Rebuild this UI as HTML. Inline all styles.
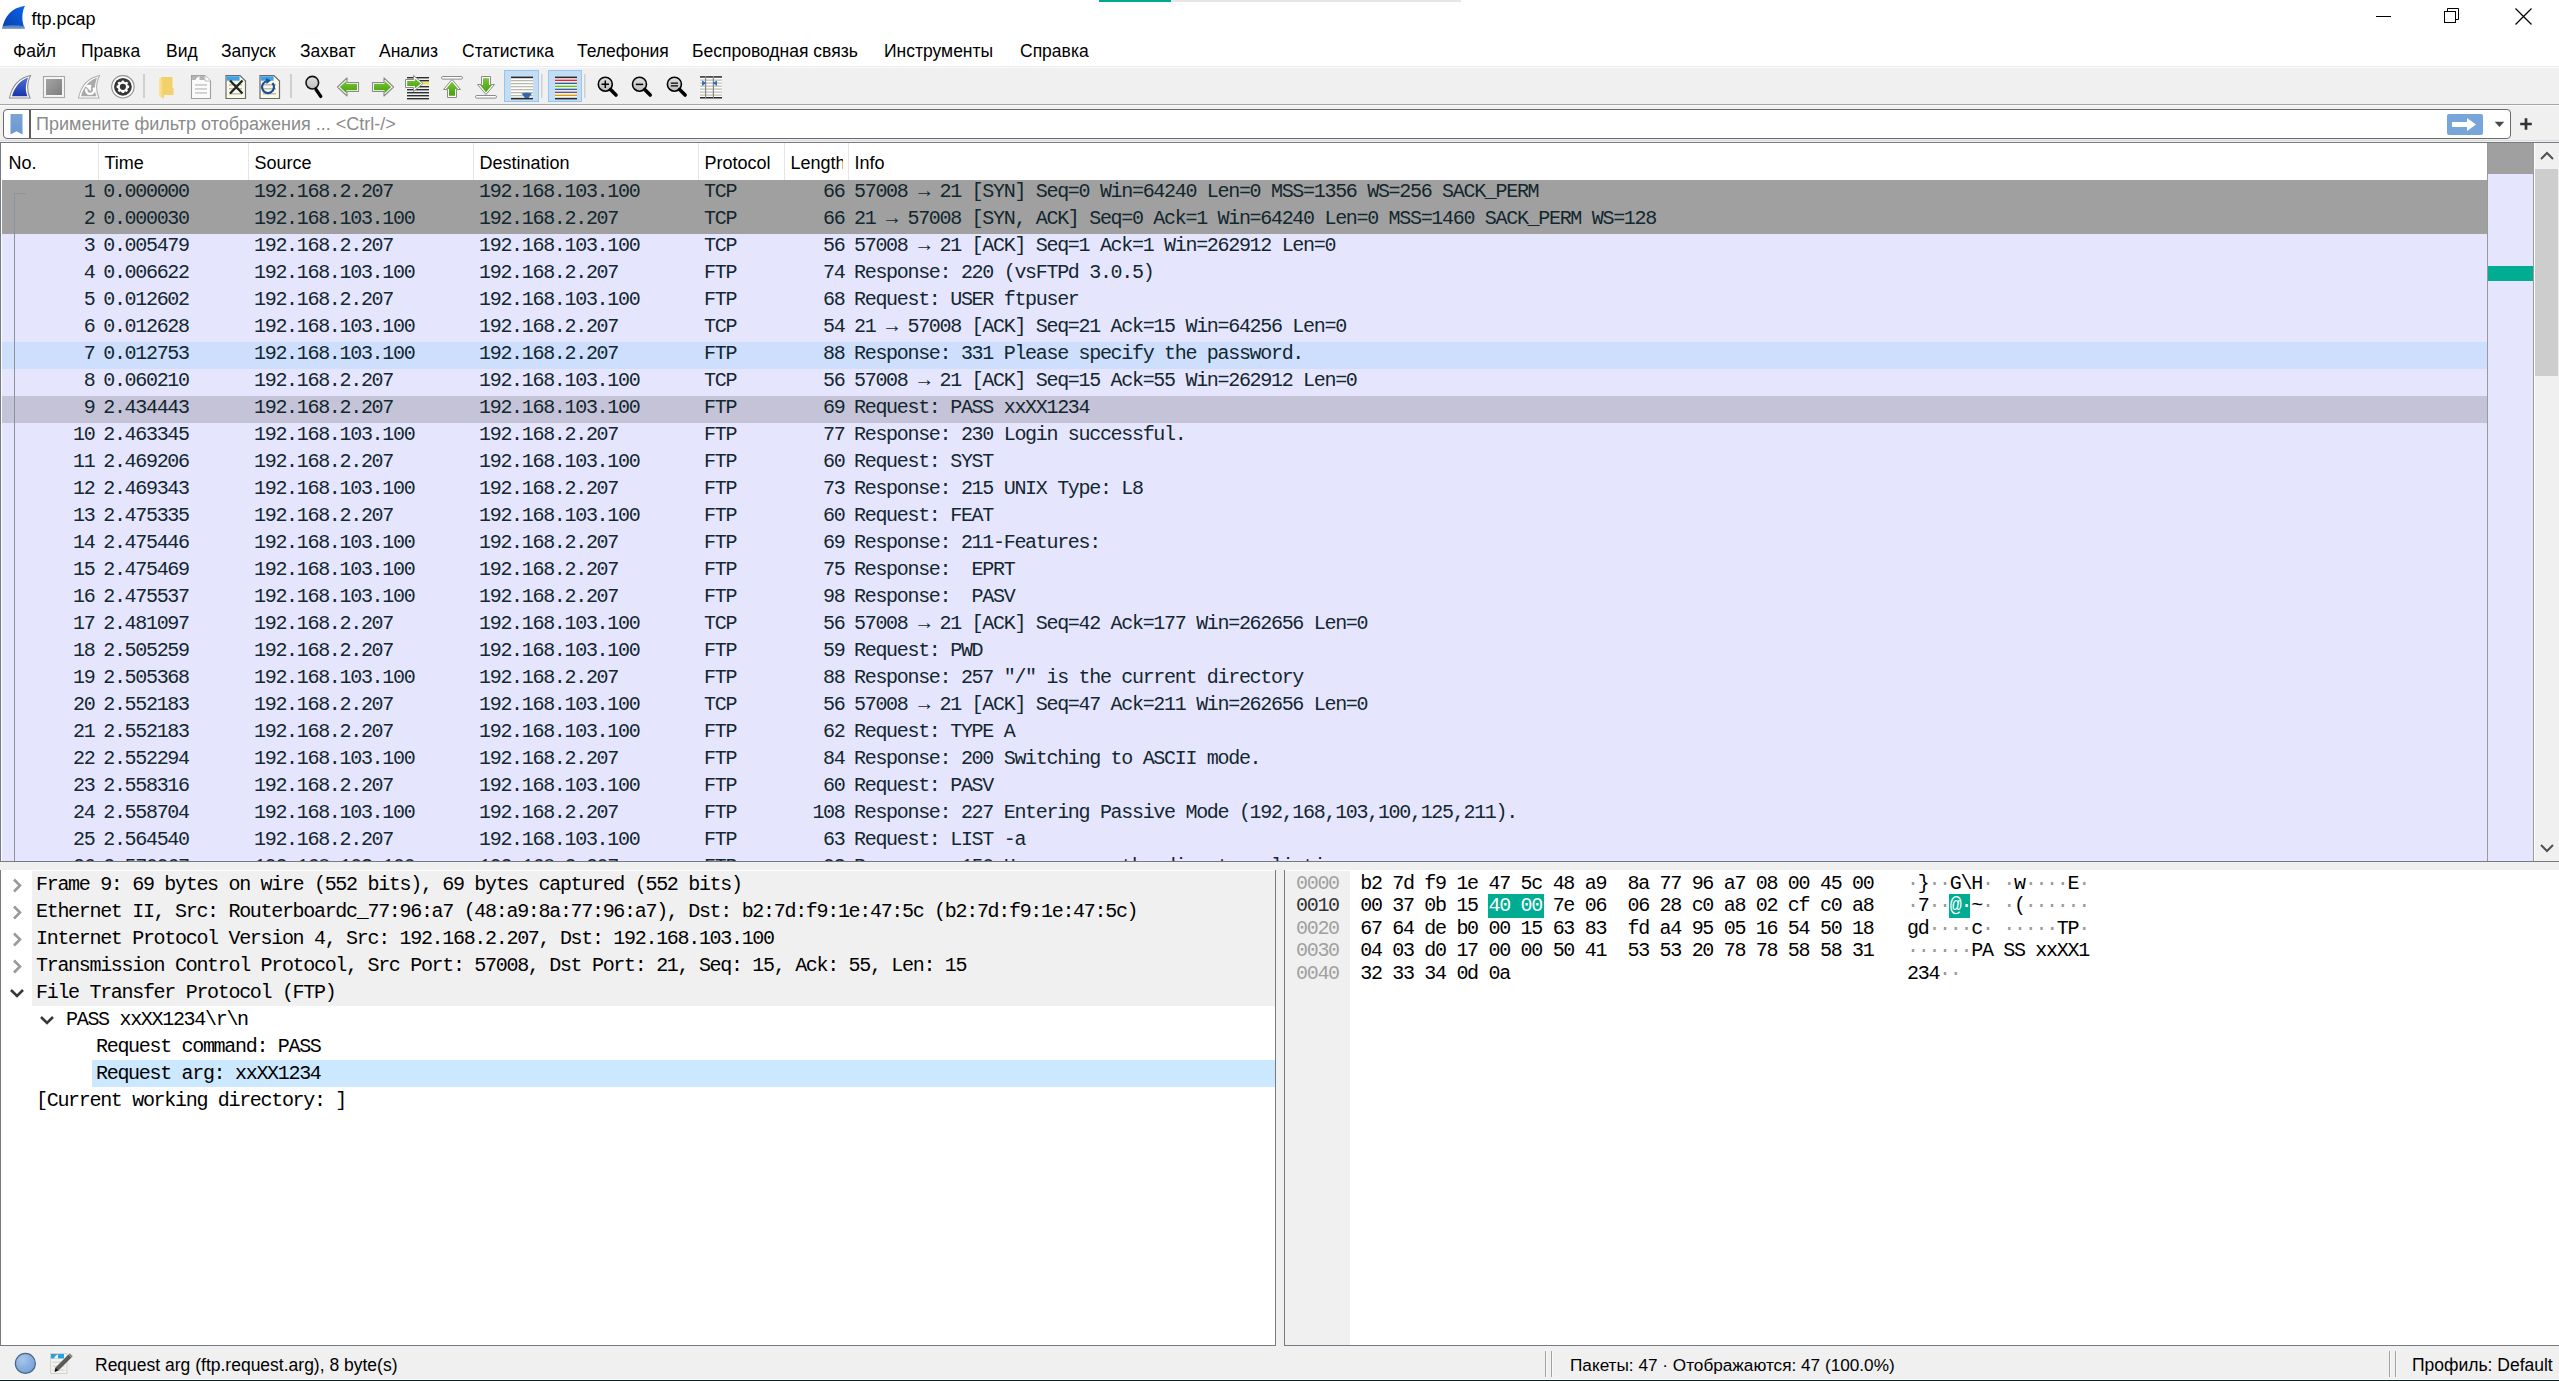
<!DOCTYPE html>
<html><head><meta charset="utf-8"><title>ftp.pcap</title>
<style>
*{box-sizing:border-box}
html,body{margin:0;padding:0}
body{width:2559px;height:1381px;overflow:hidden;position:relative;background:#fff;font-family:"Liberation Sans",sans-serif;color:#000}
.a{position:absolute}
.s{position:absolute;white-space:pre;font-family:"Liberation Sans",sans-serif}
.m{position:absolute;white-space:pre;font-family:"Liberation Mono",monospace;font-size:20px;letter-spacing:-1.31px;line-height:27px;color:#12272e}
.h{position:absolute;white-space:pre;font-family:"Liberation Mono",monospace;font-size:20px;letter-spacing:-1.31px;line-height:22px;color:#000}
.menu{position:absolute;top:35.3px;font-size:17.5px;line-height:32px;white-space:pre}
svg{position:absolute;overflow:visible}
</style></head><body>

<div class="a" style="left:1099px;top:0;width:72px;height:2px;background:#00a88f"></div>
<div class="a" style="left:1171px;top:0;width:290px;height:2px;background:#e6e6e6"></div>
<svg style="left:0;top:0" width="30" height="34"><defs><linearGradient id="gt" x1="1" y1="0" x2="0" y2="1"><stop offset="0" stop-color="#0b63e8"/><stop offset="0.6" stop-color="#0a4ec4"/><stop offset="1" stop-color="#0a3fa8"/></linearGradient></defs>
<path d="M2.2 28.4 C4.5 17 11 8 25 5.8 C22 11.5 21.2 20.5 24.7 28.4 Z" fill="url(#gt)"/><path d="M3 26 Q13 24.5 24.3 26.2 L24.7 28.6 H2.2 Z" fill="#6d95d6" opacity="0.8"/><path d="M2.2 28.2 H24.7" stroke="#9aa4b4" stroke-width="1"/></svg>
<div class="s" style="left:31.5px;top:6.5px;font-size:18px;line-height:24px">ftp.pcap</div>
<div class="a" style="left:2376px;top:16px;width:15px;height:1px;background:#000"></div>
<svg style="left:2440px;top:5px" width="24" height="24"><rect x="4.5" y="6.5" width="11" height="11" fill="none" stroke="#000" stroke-width="1"/><path d="M7.5 6.5 V3.5 H18.5 V14.5 H15.5" fill="none" stroke="#000" stroke-width="1"/></svg>
<svg style="left:2512px;top:5px" width="24" height="24"><path d="M3.5 3.5 L19.5 19.5 M19.5 3.5 L3.5 19.5" stroke="#000" stroke-width="1.2"/></svg>
<div class="menu" style="left:13px">Файл</div>
<div class="menu" style="left:81px">Правка</div>
<div class="menu" style="left:166px">Вид</div>
<div class="menu" style="left:221px">Запуск</div>
<div class="menu" style="left:300px">Захват</div>
<div class="menu" style="left:379px">Анализ</div>
<div class="menu" style="left:462px">Статистика</div>
<div class="menu" style="left:577px">Телефония</div>
<div class="menu" style="left:692px">Беспроводная связь</div>
<div class="menu" style="left:884px">Инструменты</div>
<div class="menu" style="left:1020px">Справка</div>
<div class="a" style="left:0;top:66px;width:2559px;height:1px;background:#ececec"></div>
<div class="a" style="left:0;top:67px;width:2559px;height:37px;background:#f0f0f0"></div>
<div class="a" style="left:0;top:67px;width:2559px;height:1px;background:#fbfbfb"></div>
<div class="a" style="left:0;top:104px;width:2559px;height:1px;background:#a5a5a5"></div>
<svg style="left:0;top:0" width="740" height="106" viewBox="0 0 740 106">
<defs>
<linearGradient id="fin" x1="0" y1="0" x2="0" y2="1"><stop offset="0" stop-color="#4e6fd8"/><stop offset="1" stop-color="#1a35a8"/></linearGradient>
<linearGradient id="stopg" x1="0" y1="0" x2="1" y2="1"><stop offset="0" stop-color="#a4a4a4"/><stop offset="1" stop-color="#7e7e7e"/></linearGradient>
<linearGradient id="grn" x1="0" y1="0" x2="0" y2="1"><stop offset="0" stop-color="#78c43a"/><stop offset="1" stop-color="#48a008"/></linearGradient>
<linearGradient id="fold" x1="0" y1="0" x2="1" y2="0"><stop offset="0" stop-color="#fbe6a0"/><stop offset="1" stop-color="#f3cd62"/></linearGradient>
<linearGradient id="mag" x1="0" y1="0" x2="0" y2="1"><stop offset="0" stop-color="#e0e0e0"/><stop offset="1" stop-color="#bdbdbd"/></linearGradient>
</defs>
<!-- start capture fin -->
<path d="M9.5 98 C12 86 19 78 30.5 75.5 C27 82 26.5 91 30 98 Z" fill="#fff" stroke="#8c8c8c" stroke-width="1.1"/>
<path d="M12 96.2 C14.5 87 20.5 80 28.2 77.5 C25.5 84 25 91 27.6 96.2 Z" fill="url(#fin)"/>
<!-- stop -->
<rect x="43.5" y="76.5" width="21" height="21" fill="#f6f6f6" stroke="#a8a8a8" stroke-width="1.1"/>
<rect x="46" y="79" width="16" height="16" fill="url(#stopg)"/>
<!-- restart fin -->
<path d="M78.5 98 C81 86 88 78 99.5 75.5 C96 82 95.5 91 99 98 Z" fill="#fff" stroke="#b0b0b0" stroke-width="1.1"/>
<path d="M81 96.2 C83.5 87 89.5 80 97.2 77.5 C94.5 84 94 91 96.6 96.2 Z" fill="#a9a9a9"/>
<path d="M93.4 87.6 A4 4 0 1 1 86.4 88.6" fill="none" stroke="#fff" stroke-width="2.3"/>
<path d="M84.6 85.2 L91.2 84.8 L90.9 91.2 Z" fill="#fff"/>
<!-- options gear -->
<circle cx="122.9" cy="86.8" r="11.2" fill="#fff" stroke="#8f8f8f" stroke-width="1.1"/>
<circle cx="122.9" cy="86.8" r="8.9" fill="#383838"/>
<circle cx="122.9" cy="86.8" r="6.3" fill="#fff"/>
<circle cx="128.81" cy="89.25" r="1.25" fill="#383838"/><circle cx="125.35" cy="92.71" r="1.25" fill="#383838"/><circle cx="120.45" cy="92.71" r="1.25" fill="#383838"/><circle cx="116.99" cy="89.25" r="1.25" fill="#383838"/><circle cx="116.99" cy="84.35" r="1.25" fill="#383838"/><circle cx="120.45" cy="80.89" r="1.25" fill="#383838"/><circle cx="125.35" cy="80.89" r="1.25" fill="#383838"/><circle cx="128.81" cy="84.35" r="1.25" fill="#383838"/>
<circle cx="122.9" cy="86.8" r="3.1" fill="#333"/>
<rect x="143" y="74" width="2" height="24" fill="#cfcfcf"/>
<!-- folder -->
<path d="M161 77 H172.5 V88 H173.5 V95 H162 Z" fill="#f4d06a"/>
<path d="M159 77.2 L164 80.2 V98.5 L159 96.2 Z" fill="url(#fold)"/>
<!-- save doc (grey) -->
<path d="M191.5 75.5 H205 L210.5 81 V98.5 H191.5 Z" fill="#fbfbfb" stroke="#a0a0a0" stroke-width="1.1"/>
<rect x="192" y="76" width="12.5" height="4" fill="#b4b4b4"/><path d="M195.5 80 C196.5 77.8 198 76.6 200 76.3 C199.2 77.5 199.2 79 199.6 80 Z" fill="#fff"/>
<path d="M205 75.5 V81 H210.5" fill="#fff" stroke="#b0b0b0" stroke-width="0.8"/>
<g fill="#cfcfcf"><rect x="195" y="84" width="12" height="1.8"/><rect x="195" y="88" width="12" height="1.8"/><rect x="195" y="92" width="12" height="1.8"/></g>
<!-- close doc -->
<path d="M226 75.5 H240 L245.5 81 V98.5 H226 Z" fill="#fafae6" stroke="#6a6a6a" stroke-width="1.2"/>
<rect x="226.6" y="76.2" width="13" height="4.5" fill="#3ea2e6"/>
<g fill="#bdbdb0"><rect x="229" y="84" width="13" height="1.5"/><rect x="229" y="88" width="13" height="1.5"/><rect x="229" y="93" width="13" height="1.5"/></g>
<path d="M230 80.5 L242.5 93.5 M242.5 80.5 L230 93.5" stroke="#222" stroke-width="2.3"/>
<!-- reload doc -->
<path d="M260 75.5 H274 L279.5 81 V98.5 H260 Z" fill="#fafae6" stroke="#6a6a6a" stroke-width="1.2"/>
<rect x="260.6" y="76.2" width="13" height="4.5" fill="#3ea2e6"/>
<g fill="#bdbdb0"><rect x="263" y="84" width="13" height="1.5"/><rect x="263" y="88" width="13" height="1.5"/><rect x="263" y="93" width="13" height="1.5"/></g>
<path d="M272.5 83 A6 6 0 1 1 268 81" fill="none" stroke="#1d4e9a" stroke-width="2.2"/>
<path d="M266 78 L271 80.5 L266.5 84 Z" fill="#1d4e9a"/>
<rect x="290" y="74" width="2" height="24" fill="#cfcfcf"/>
<!-- find -->
<circle cx="312.3" cy="82.7" r="6.3" fill="url(#mag)" stroke="#111" stroke-width="1.6"/>
<path d="M316 89.5 L320.8 96.5" stroke="#000" stroke-width="3.2" stroke-linecap="round"/>
<!-- back -->
<path d="M337.5 87 L347 78 V82.5 H358.5 V91.5 H347 V96 Z" fill="#fff" stroke="#8a8a8a" stroke-width="1.1" stroke-linejoin="round"/>
<path d="M339.8 87 L346.5 80.8 V83.8 H357 V90.2 H346.5 V93.2 Z" fill="url(#grn)"/>
<!-- forward -->
<path d="M393.5 87 L384 78 V82.5 H372.5 V91.5 H384 V96 Z" fill="#fff" stroke="#8a8a8a" stroke-width="1.1" stroke-linejoin="round"/>
<path d="M391.2 87 L384.5 80.8 V83.8 H374 V90.2 H384.5 V93.2 Z" fill="url(#grn)"/>
<!-- go to packet -->
<g fill="#2a2f33"><rect x="407" y="77" width="22" height="1.4"/><rect x="407" y="80" width="22" height="1.4"/><rect x="407" y="86" width="22" height="1.4"/><rect x="407" y="89" width="22" height="1.4"/><rect x="407" y="92" width="22" height="1.4"/><rect x="407" y="95" width="22" height="1.4"/><rect x="407" y="98" width="22" height="1.4"/></g>
<rect x="421" y="82.3" width="8" height="2.2" fill="#f7dc3a"/>
<path d="M405.5 79.5 H413.5 V75.5 L423 83.5 L413.5 91.5 V87.5 H405.5 Z" fill="#fff" stroke="#8a8a8a" stroke-width="1" stroke-linejoin="round"/>
<path d="M407.2 81 H414.8 V78.6 L421 83.5 L414.8 88.4 V86 H407.2 Z" fill="url(#grn)"/>
<!-- first packet -->
<rect x="441.5" y="76.5" width="21" height="2.6" rx="1.3" fill="#fff" stroke="#8a8a8a" stroke-width="1"/>
<path d="M452 79.5 L443.5 89.5 H447.5 V97.5 H456.5 V89.5 H460.5 Z" fill="#fff" stroke="#8a8a8a" stroke-width="1" stroke-linejoin="round"/>
<path d="M452 81.8 L446 89 H449 V95.8 H455 V89 H458 Z" fill="url(#grn)"/>
<!-- last packet -->
<rect x="475.5" y="95.5" width="21" height="2.6" rx="1.3" fill="#fff" stroke="#8a8a8a" stroke-width="1"/>
<path d="M486 94.5 L477.5 84.5 H481.5 V76.5 H490.5 V84.5 H494.5 Z" fill="#fff" stroke="#8a8a8a" stroke-width="1" stroke-linejoin="round"/>
<path d="M486 92.2 L480 85 H483 V78.2 H489 V85 H492 Z" fill="url(#grn)"/>
<!-- auto scroll toggled -->
<rect x="504.5" y="70.5" width="34" height="31" fill="#c5ddf2" stroke="#94c6f4" stroke-width="1"/>
<rect x="511" y="77" width="22" height="22" fill="#fff"/>
<g fill="#b9b9ae"><rect x="511" y="80" width="22" height="1.3"/><rect x="511" y="83" width="22" height="1.3"/><rect x="511" y="86" width="22" height="1.3"/><rect x="511" y="89" width="22" height="1.3"/><rect x="511" y="92" width="22" height="1.3"/><rect x="511" y="95" width="22" height="1.3"/></g>
<rect x="511" y="76.6" width="22" height="1.6" fill="#25292c"/>
<rect x="511" y="97.8" width="22" height="1.6" fill="#25292c"/>
<path d="M521.5 93.5 Q527 91.8 532 93.5 L528.5 98 H525 Z" fill="#3466aa"/>
<rect x="541" y="74" width="1.5" height="24" fill="#d0d0d0"/>
<!-- colorize toggled -->
<rect x="548.5" y="70.5" width="33" height="31" fill="#c5ddf2" stroke="#94c6f4" stroke-width="1"/>
<rect x="555" y="77" width="22" height="22" fill="#fff"/>
<rect x="555" y="76.6" width="22" height="1.6" fill="#25292c"/>
<rect x="555" y="79.6" width="22" height="1.5" fill="#ea2727"/>
<rect x="555" y="82.6" width="22" height="1.5" fill="#2f5fa7"/>
<rect x="555" y="85.6" width="22" height="1.5" fill="#5fc70e"/>
<rect x="555" y="88.6" width="22" height="1.5" fill="#2f5fa7"/>
<rect x="555" y="91.6" width="22" height="1.5" fill="#6d4f86"/>
<rect x="555" y="94.6" width="22" height="1.5" fill="#cca00e"/>
<rect x="555" y="97.8" width="22" height="1.6" fill="#25292c"/>
<rect x="584" y="74" width="1.5" height="24" fill="#d0d0d0"/>
<!-- zoom in/out/normal -->
<g stroke="#000">
<circle cx="605.3" cy="84.2" r="7" fill="url(#mag)" stroke-width="1.6"/>
<path d="M610.5 89.5 L616 95" stroke-width="3.6" stroke-linecap="round"/>
<path d="M601.5 84.2 H609 M605.3 80.4 V88" stroke-width="1.5"/>
<circle cx="639.5" cy="84.2" r="7" fill="url(#mag)" stroke-width="1.6"/>
<path d="M644.7 89.5 L650.2 95" stroke-width="3.6" stroke-linecap="round"/>
<path d="M635.8 84.4 H643.2" stroke-width="1.5"/>
<circle cx="674.4" cy="84.2" r="7" fill="url(#mag)" stroke-width="1.6"/>
<path d="M679.6 89.5 L685.1 95" stroke-width="3.6" stroke-linecap="round"/>
<path d="M670.8 83.2 H678 M670.8 85.8 H678" stroke-width="1.3"/>
</g>
<!-- resize columns -->
<rect x="700" y="76.5" width="22" height="21" fill="#fff"/>
<g fill="#b9b9ae"><rect x="700" y="79.5" width="22" height="1.2"/><rect x="700" y="82.5" width="22" height="1.2"/><rect x="700" y="85.5" width="22" height="1.2"/><rect x="700" y="88.5" width="22" height="1.2"/><rect x="700" y="91.5" width="22" height="1.2"/><rect x="700" y="94.5" width="22" height="1.2"/></g>
<rect x="700" y="76.2" width="22" height="1.5" fill="#25292c"/>
<rect x="700" y="97" width="22" height="1.5" fill="#25292c"/>
<rect x="705" y="76" width="1.2" height="22" fill="#888"/>
<rect x="712.8" y="76" width="1.2" height="22" fill="#888"/>
<path d="M702 80.5 L706.5 83 L702 86 Z" fill="#3a6fbf"/>
<path d="M717 80.5 L712.5 83 L717 86 Z" fill="#3a6fbf"/>
</svg>

<div class="a" style="left:0;top:105px;width:2559px;height:37px;background:#f0f0f0"></div>
<div class="a" style="left:0;top:105px;width:2559px;height:1px;background:#fbfbfb"></div>
<div class="a" style="left:3px;top:109px;width:2508px;height:30px;background:#fff;border:1.5px solid #6b6b6b;border-radius:4px"></div>
<div class="a" style="left:29px;top:110px;width:2px;height:28px;background:#5e5e5e"></div>
<svg style="left:10px;top:114px" width="13" height="21"><defs><linearGradient id="bk" x1="0" y1="0" x2="0" y2="1"><stop offset="0" stop-color="#7ba4d4"/><stop offset="1" stop-color="#6b98d0"/></linearGradient></defs><path d="M0.5 0 H12.5 V20.5 L6.5 17.3 L0.5 20.5 Z" fill="url(#bk)"/></svg>
<div class="s" style="left:36px;top:111px;font-size:18px;line-height:27px;color:#8b8b8b">Примените фильтр отображения ... &lt;Ctrl-/&gt;</div>
<svg style="left:2447px;top:114px" width="36" height="21"><rect x="0" y="0" width="36" height="21" rx="2" fill="#78a6da"/><path d="M5 8 H20 V4 L29 10.5 L20 17 V13 H5 Z" fill="#fff"/></svg>
<svg style="left:2492px;top:120px" width="14" height="8"><path d="M2.7 1.7 H12.2 L7.45 6.9 Z" fill="#4a4a4a"/></svg>
<svg style="left:2518px;top:116px" width="16" height="16"><path d="M8 2.2 V13.8 M2.2 8 H13.8" stroke="#333" stroke-width="2.7"/></svg>
<div class="a" style="left:0;top:140px;width:2559px;height:1px;background:#dcdcdc"></div>
<div class="a" style="left:0;top:142px;width:2559px;height:720px;background:#fff;border:1px solid #757a83;border-right:none"></div>
<div class="a" style="left:98px;top:143px;width:1px;height:37px;background:#e5e5e5"></div>
<div class="a" style="left:248px;top:143px;width:1px;height:37px;background:#e5e5e5"></div>
<div class="a" style="left:473px;top:143px;width:1px;height:37px;background:#e5e5e5"></div>
<div class="a" style="left:698px;top:143px;width:1px;height:37px;background:#e5e5e5"></div>
<div class="a" style="left:784px;top:143px;width:1px;height:37px;background:#e5e5e5"></div>
<div class="a" style="left:848px;top:143px;width:1px;height:37px;background:#e5e5e5"></div>
<div class="s" style="left:8.5px;top:148.2px;font-size:18px;line-height:30px;">No.</div>
<div class="s" style="left:104.5px;top:148.2px;font-size:18px;line-height:30px;">Time</div>
<div class="s" style="left:254.5px;top:148.2px;font-size:18px;line-height:30px;">Source</div>
<div class="s" style="left:479.5px;top:148.2px;font-size:18px;line-height:30px;">Destination</div>
<div class="s" style="left:704.5px;top:148.2px;font-size:18px;line-height:30px;">Protocol</div>
<div class="s" style="left:790.5px;top:148.2px;font-size:18px;line-height:30px;width:52px;overflow:hidden;">Length</div>
<div class="s" style="left:854.5px;top:148.2px;font-size:18px;line-height:30px;">Info</div>
<div class="a" style="left:2px;top:180px;width:2485px;height:681px;overflow:hidden">
<div class="a" style="left:0;top:0px;width:2485px;height:27px;background:#a0a0a0"></div>
<div class="m" style="left:81.81px;top:-2px;">1</div>
<div class="m" style="left:101.2px;top:-2px;">0.000000</div>
<div class="m" style="left:252px;top:-2px;">192.168.2.207</div>
<div class="m" style="left:477px;top:-2px;">192.168.103.100</div>
<div class="m" style="left:702px;top:-2px;">TCP</div>
<div class="m" style="left:821.12px;top:-2px;">66</div>
<div class="m" style="left:852px;top:-2px;">57008 → 21 [SYN] Seq=0 Win=64240 Len=0 MSS=1356 WS=256 SACK_PERM</div>
<div class="a" style="left:0;top:27px;width:2485px;height:27px;background:#a0a0a0"></div>
<div class="m" style="left:81.81px;top:25px;">2</div>
<div class="m" style="left:101.2px;top:25px;">0.000030</div>
<div class="m" style="left:252px;top:25px;">192.168.103.100</div>
<div class="m" style="left:477px;top:25px;">192.168.2.207</div>
<div class="m" style="left:702px;top:25px;">TCP</div>
<div class="m" style="left:821.12px;top:25px;">66</div>
<div class="m" style="left:852px;top:25px;">21 → 57008 [SYN, ACK] Seq=0 Ack=1 Win=64240 Len=0 MSS=1460 SACK_PERM WS=128</div>
<div class="a" style="left:0;top:54px;width:2485px;height:27px;background:#e6e5fe"></div>
<div class="m" style="left:81.81px;top:52px;">3</div>
<div class="m" style="left:101.2px;top:52px;">0.005479</div>
<div class="m" style="left:252px;top:52px;">192.168.2.207</div>
<div class="m" style="left:477px;top:52px;">192.168.103.100</div>
<div class="m" style="left:702px;top:52px;">TCP</div>
<div class="m" style="left:821.12px;top:52px;">56</div>
<div class="m" style="left:852px;top:52px;">57008 → 21 [ACK] Seq=1 Ack=1 Win=262912 Len=0</div>
<div class="a" style="left:0;top:81px;width:2485px;height:27px;background:#e6e5fe"></div>
<div class="m" style="left:81.81px;top:79px;">4</div>
<div class="m" style="left:101.2px;top:79px;">0.006622</div>
<div class="m" style="left:252px;top:79px;">192.168.103.100</div>
<div class="m" style="left:477px;top:79px;">192.168.2.207</div>
<div class="m" style="left:702px;top:79px;">FTP</div>
<div class="m" style="left:821.12px;top:79px;">74</div>
<div class="m" style="left:852px;top:79px;">Response: 220 (vsFTPd 3.0.5)</div>
<div class="a" style="left:0;top:108px;width:2485px;height:27px;background:#e6e5fe"></div>
<div class="m" style="left:81.81px;top:106px;">5</div>
<div class="m" style="left:101.2px;top:106px;">0.012602</div>
<div class="m" style="left:252px;top:106px;">192.168.2.207</div>
<div class="m" style="left:477px;top:106px;">192.168.103.100</div>
<div class="m" style="left:702px;top:106px;">FTP</div>
<div class="m" style="left:821.12px;top:106px;">68</div>
<div class="m" style="left:852px;top:106px;">Request: USER ftpuser</div>
<div class="a" style="left:0;top:135px;width:2485px;height:27px;background:#e6e5fe"></div>
<div class="m" style="left:81.81px;top:133px;">6</div>
<div class="m" style="left:101.2px;top:133px;">0.012628</div>
<div class="m" style="left:252px;top:133px;">192.168.103.100</div>
<div class="m" style="left:477px;top:133px;">192.168.2.207</div>
<div class="m" style="left:702px;top:133px;">TCP</div>
<div class="m" style="left:821.12px;top:133px;">54</div>
<div class="m" style="left:852px;top:133px;">21 → 57008 [ACK] Seq=21 Ack=15 Win=64256 Len=0</div>
<div class="a" style="left:0;top:162px;width:2485px;height:27px;background:#cddffd"></div>
<div class="m" style="left:81.81px;top:160px;">7</div>
<div class="m" style="left:101.2px;top:160px;">0.012753</div>
<div class="m" style="left:252px;top:160px;">192.168.103.100</div>
<div class="m" style="left:477px;top:160px;">192.168.2.207</div>
<div class="m" style="left:702px;top:160px;">FTP</div>
<div class="m" style="left:821.12px;top:160px;">88</div>
<div class="m" style="left:852px;top:160px;">Response: 331 Please specify the password.</div>
<div class="a" style="left:0;top:189px;width:2485px;height:27px;background:#e6e5fe"></div>
<div class="m" style="left:81.81px;top:187px;">8</div>
<div class="m" style="left:101.2px;top:187px;">0.060210</div>
<div class="m" style="left:252px;top:187px;">192.168.2.207</div>
<div class="m" style="left:477px;top:187px;">192.168.103.100</div>
<div class="m" style="left:702px;top:187px;">TCP</div>
<div class="m" style="left:821.12px;top:187px;">56</div>
<div class="m" style="left:852px;top:187px;">57008 → 21 [ACK] Seq=15 Ack=55 Win=262912 Len=0</div>
<div class="a" style="left:0;top:216px;width:2485px;height:27px;background:#c5c3d8"></div>
<div class="m" style="left:81.81px;top:214px;">9</div>
<div class="m" style="left:101.2px;top:214px;">2.434443</div>
<div class="m" style="left:252px;top:214px;">192.168.2.207</div>
<div class="m" style="left:477px;top:214px;">192.168.103.100</div>
<div class="m" style="left:702px;top:214px;">FTP</div>
<div class="m" style="left:821.12px;top:214px;">69</div>
<div class="m" style="left:852px;top:214px;">Request: PASS xxXX1234</div>
<div class="a" style="left:0;top:243px;width:2485px;height:27px;background:#e6e5fe"></div>
<div class="m" style="left:71.12px;top:241px;">10</div>
<div class="m" style="left:101.2px;top:241px;">2.463345</div>
<div class="m" style="left:252px;top:241px;">192.168.103.100</div>
<div class="m" style="left:477px;top:241px;">192.168.2.207</div>
<div class="m" style="left:702px;top:241px;">FTP</div>
<div class="m" style="left:821.12px;top:241px;">77</div>
<div class="m" style="left:852px;top:241px;">Response: 230 Login successful.</div>
<div class="a" style="left:0;top:270px;width:2485px;height:27px;background:#e6e5fe"></div>
<div class="m" style="left:71.12px;top:268px;">11</div>
<div class="m" style="left:101.2px;top:268px;">2.469206</div>
<div class="m" style="left:252px;top:268px;">192.168.2.207</div>
<div class="m" style="left:477px;top:268px;">192.168.103.100</div>
<div class="m" style="left:702px;top:268px;">FTP</div>
<div class="m" style="left:821.12px;top:268px;">60</div>
<div class="m" style="left:852px;top:268px;">Request: SYST</div>
<div class="a" style="left:0;top:297px;width:2485px;height:27px;background:#e6e5fe"></div>
<div class="m" style="left:71.12px;top:295px;">12</div>
<div class="m" style="left:101.2px;top:295px;">2.469343</div>
<div class="m" style="left:252px;top:295px;">192.168.103.100</div>
<div class="m" style="left:477px;top:295px;">192.168.2.207</div>
<div class="m" style="left:702px;top:295px;">FTP</div>
<div class="m" style="left:821.12px;top:295px;">73</div>
<div class="m" style="left:852px;top:295px;">Response: 215 UNIX Type: L8</div>
<div class="a" style="left:0;top:324px;width:2485px;height:27px;background:#e6e5fe"></div>
<div class="m" style="left:71.12px;top:322px;">13</div>
<div class="m" style="left:101.2px;top:322px;">2.475335</div>
<div class="m" style="left:252px;top:322px;">192.168.2.207</div>
<div class="m" style="left:477px;top:322px;">192.168.103.100</div>
<div class="m" style="left:702px;top:322px;">FTP</div>
<div class="m" style="left:821.12px;top:322px;">60</div>
<div class="m" style="left:852px;top:322px;">Request: FEAT</div>
<div class="a" style="left:0;top:351px;width:2485px;height:27px;background:#e6e5fe"></div>
<div class="m" style="left:71.12px;top:349px;">14</div>
<div class="m" style="left:101.2px;top:349px;">2.475446</div>
<div class="m" style="left:252px;top:349px;">192.168.103.100</div>
<div class="m" style="left:477px;top:349px;">192.168.2.207</div>
<div class="m" style="left:702px;top:349px;">FTP</div>
<div class="m" style="left:821.12px;top:349px;">69</div>
<div class="m" style="left:852px;top:349px;">Response: 211-Features:</div>
<div class="a" style="left:0;top:378px;width:2485px;height:27px;background:#e6e5fe"></div>
<div class="m" style="left:71.12px;top:376px;">15</div>
<div class="m" style="left:101.2px;top:376px;">2.475469</div>
<div class="m" style="left:252px;top:376px;">192.168.103.100</div>
<div class="m" style="left:477px;top:376px;">192.168.2.207</div>
<div class="m" style="left:702px;top:376px;">FTP</div>
<div class="m" style="left:821.12px;top:376px;">75</div>
<div class="m" style="left:852px;top:376px;">Response:  EPRT</div>
<div class="a" style="left:0;top:405px;width:2485px;height:27px;background:#e6e5fe"></div>
<div class="m" style="left:71.12px;top:403px;">16</div>
<div class="m" style="left:101.2px;top:403px;">2.475537</div>
<div class="m" style="left:252px;top:403px;">192.168.103.100</div>
<div class="m" style="left:477px;top:403px;">192.168.2.207</div>
<div class="m" style="left:702px;top:403px;">FTP</div>
<div class="m" style="left:821.12px;top:403px;">98</div>
<div class="m" style="left:852px;top:403px;">Response:  PASV</div>
<div class="a" style="left:0;top:432px;width:2485px;height:27px;background:#e6e5fe"></div>
<div class="m" style="left:71.12px;top:430px;">17</div>
<div class="m" style="left:101.2px;top:430px;">2.481097</div>
<div class="m" style="left:252px;top:430px;">192.168.2.207</div>
<div class="m" style="left:477px;top:430px;">192.168.103.100</div>
<div class="m" style="left:702px;top:430px;">TCP</div>
<div class="m" style="left:821.12px;top:430px;">56</div>
<div class="m" style="left:852px;top:430px;">57008 → 21 [ACK] Seq=42 Ack=177 Win=262656 Len=0</div>
<div class="a" style="left:0;top:459px;width:2485px;height:27px;background:#e6e5fe"></div>
<div class="m" style="left:71.12px;top:457px;">18</div>
<div class="m" style="left:101.2px;top:457px;">2.505259</div>
<div class="m" style="left:252px;top:457px;">192.168.2.207</div>
<div class="m" style="left:477px;top:457px;">192.168.103.100</div>
<div class="m" style="left:702px;top:457px;">FTP</div>
<div class="m" style="left:821.12px;top:457px;">59</div>
<div class="m" style="left:852px;top:457px;">Request: PWD</div>
<div class="a" style="left:0;top:486px;width:2485px;height:27px;background:#e6e5fe"></div>
<div class="m" style="left:71.12px;top:484px;">19</div>
<div class="m" style="left:101.2px;top:484px;">2.505368</div>
<div class="m" style="left:252px;top:484px;">192.168.103.100</div>
<div class="m" style="left:477px;top:484px;">192.168.2.207</div>
<div class="m" style="left:702px;top:484px;">FTP</div>
<div class="m" style="left:821.12px;top:484px;">88</div>
<div class="m" style="left:852px;top:484px;">Response: 257 &quot;/&quot; is the current directory</div>
<div class="a" style="left:0;top:513px;width:2485px;height:27px;background:#e6e5fe"></div>
<div class="m" style="left:71.12px;top:511px;">20</div>
<div class="m" style="left:101.2px;top:511px;">2.552183</div>
<div class="m" style="left:252px;top:511px;">192.168.2.207</div>
<div class="m" style="left:477px;top:511px;">192.168.103.100</div>
<div class="m" style="left:702px;top:511px;">TCP</div>
<div class="m" style="left:821.12px;top:511px;">56</div>
<div class="m" style="left:852px;top:511px;">57008 → 21 [ACK] Seq=47 Ack=211 Win=262656 Len=0</div>
<div class="a" style="left:0;top:540px;width:2485px;height:27px;background:#e6e5fe"></div>
<div class="m" style="left:71.12px;top:538px;">21</div>
<div class="m" style="left:101.2px;top:538px;">2.552183</div>
<div class="m" style="left:252px;top:538px;">192.168.2.207</div>
<div class="m" style="left:477px;top:538px;">192.168.103.100</div>
<div class="m" style="left:702px;top:538px;">FTP</div>
<div class="m" style="left:821.12px;top:538px;">62</div>
<div class="m" style="left:852px;top:538px;">Request: TYPE A</div>
<div class="a" style="left:0;top:567px;width:2485px;height:27px;background:#e6e5fe"></div>
<div class="m" style="left:71.12px;top:565px;">22</div>
<div class="m" style="left:101.2px;top:565px;">2.552294</div>
<div class="m" style="left:252px;top:565px;">192.168.103.100</div>
<div class="m" style="left:477px;top:565px;">192.168.2.207</div>
<div class="m" style="left:702px;top:565px;">FTP</div>
<div class="m" style="left:821.12px;top:565px;">84</div>
<div class="m" style="left:852px;top:565px;">Response: 200 Switching to ASCII mode.</div>
<div class="a" style="left:0;top:594px;width:2485px;height:27px;background:#e6e5fe"></div>
<div class="m" style="left:71.12px;top:592px;">23</div>
<div class="m" style="left:101.2px;top:592px;">2.558316</div>
<div class="m" style="left:252px;top:592px;">192.168.2.207</div>
<div class="m" style="left:477px;top:592px;">192.168.103.100</div>
<div class="m" style="left:702px;top:592px;">FTP</div>
<div class="m" style="left:821.12px;top:592px;">60</div>
<div class="m" style="left:852px;top:592px;">Request: PASV</div>
<div class="a" style="left:0;top:621px;width:2485px;height:27px;background:#e6e5fe"></div>
<div class="m" style="left:71.12px;top:619px;">24</div>
<div class="m" style="left:101.2px;top:619px;">2.558704</div>
<div class="m" style="left:252px;top:619px;">192.168.103.100</div>
<div class="m" style="left:477px;top:619px;">192.168.2.207</div>
<div class="m" style="left:702px;top:619px;">FTP</div>
<div class="m" style="left:810.43px;top:619px;">108</div>
<div class="m" style="left:852px;top:619px;">Response: 227 Entering Passive Mode (192,168,103,100,125,211).</div>
<div class="a" style="left:0;top:648px;width:2485px;height:27px;background:#e6e5fe"></div>
<div class="m" style="left:71.12px;top:646px;">25</div>
<div class="m" style="left:101.2px;top:646px;">2.564540</div>
<div class="m" style="left:252px;top:646px;">192.168.2.207</div>
<div class="m" style="left:477px;top:646px;">192.168.103.100</div>
<div class="m" style="left:702px;top:646px;">FTP</div>
<div class="m" style="left:821.12px;top:646px;">63</div>
<div class="m" style="left:852px;top:646px;">Request: LIST -a</div>
<div class="a" style="left:0;top:675px;width:2485px;height:27px;background:#e6e5fe"></div>
<div class="m" style="left:71.12px;top:673px;">26</div>
<div class="m" style="left:101.2px;top:673px;">2.570967</div>
<div class="m" style="left:252px;top:673px;">192.168.103.100</div>
<div class="m" style="left:477px;top:673px;">192.168.2.207</div>
<div class="m" style="left:702px;top:673px;">FTP</div>
<div class="m" style="left:821.12px;top:673px;">93</div>
<div class="m" style="left:852px;top:673px;">Response: 150 Here comes the directory listing.</div>
<div class="a" style="left:12px;top:13px;width:1px;height:700px;background:#8a949c"></div>
<div class="a" style="left:12px;top:13px;width:12px;height:1px;background:#8a949c"></div>
</div>
<div class="a" style="left:2487px;top:143px;width:47px;height:718px;background:#e6e5fe;border-left:1px solid #9a9a9a;border-right:1px solid #9a9a9a"></div>
<div class="a" style="left:2488px;top:143px;width:45px;height:31px;background:#a0a0a0"></div>
<div class="a" style="left:2488px;top:266px;width:45px;height:15px;background:#00ad92"></div>
<div class="a" style="left:2535px;top:143px;width:24px;height:718px;background:#f0f0f0"></div>
<div class="a" style="left:2535px;top:169px;width:23px;height:207px;background:#cdcdcd"></div>
<svg style="left:2539px;top:150px" width="16" height="12"><path d="M2 9 L8 3 L14 9" fill="none" stroke="#505050" stroke-width="2"/></svg>
<svg style="left:2539px;top:842px" width="16" height="12"><path d="M2 3 L8 9 L14 3" fill="none" stroke="#505050" stroke-width="2"/></svg>
<div class="a" style="left:0;top:861px;width:2559px;height:1px;background:#757a83"></div>
<div class="a" style="left:0;top:862px;width:2559px;height:8px;background:#f0f0f0"></div>
<div class="a" style="left:0;top:870px;width:1276px;height:476px;background:#fff;border:1px solid #757a83;border-top:none;border-right:1px solid #757a83"></div>
<div class="a" style="left:1276px;top:862px;width:8px;height:484px;background:#f0f0f0"></div>
<div class="a" style="left:32px;top:871px;width:1243px;height:27px;background:#f0f0f0"></div>
<div class="a" style="left:32px;top:898px;width:1243px;height:27px;background:#f0f0f0"></div>
<div class="a" style="left:32px;top:925px;width:1243px;height:27px;background:#f0f0f0"></div>
<div class="a" style="left:32px;top:952px;width:1243px;height:27px;background:#f0f0f0"></div>
<div class="a" style="left:32px;top:979px;width:1243px;height:27px;background:#f0f0f0"></div>
<div class="a" style="left:92px;top:1060px;width:1183px;height:27px;background:#cce8ff"></div>
<div class="m" style="left:36px;top:871px;color:#000">Frame 9: 69 bytes on wire (552 bits), 69 bytes captured (552 bits)</div>
<svg style="left:9.5px;top:878px" width="14" height="16"><path d="M4 1.5 L10 7.5 L4 13.5" fill="none" stroke="#9a9a9a" stroke-width="2.6"/></svg>
<div class="m" style="left:36px;top:898px;color:#000">Ethernet II, Src: Routerboardc_77:96:a7 (48:a9:8a:77:96:a7), Dst: b2:7d:f9:1e:47:5c (b2:7d:f9:1e:47:5c)</div>
<svg style="left:9.5px;top:905px" width="14" height="16"><path d="M4 1.5 L10 7.5 L4 13.5" fill="none" stroke="#9a9a9a" stroke-width="2.6"/></svg>
<div class="m" style="left:36px;top:925px;color:#000">Internet Protocol Version 4, Src: 192.168.2.207, Dst: 192.168.103.100</div>
<svg style="left:9.5px;top:932px" width="14" height="16"><path d="M4 1.5 L10 7.5 L4 13.5" fill="none" stroke="#9a9a9a" stroke-width="2.6"/></svg>
<div class="m" style="left:36px;top:952px;color:#000">Transmission Control Protocol, Src Port: 57008, Dst Port: 21, Seq: 15, Ack: 55, Len: 15</div>
<svg style="left:9.5px;top:959px" width="14" height="16"><path d="M4 1.5 L10 7.5 L4 13.5" fill="none" stroke="#9a9a9a" stroke-width="2.6"/></svg>
<div class="m" style="left:36px;top:979px;color:#000">File Transfer Protocol (FTP)</div>
<svg style="left:9px;top:987px" width="16" height="12"><path d="M2 3 L8 9 L14 3" fill="none" stroke="#383838" stroke-width="2.6"/></svg>
<div class="m" style="left:66px;top:1006px;color:#000">PASS xxXX1234\r\n</div>
<svg style="left:39px;top:1014px" width="16" height="12"><path d="M2 3 L8 9 L14 3" fill="none" stroke="#383838" stroke-width="2.6"/></svg>
<div class="m" style="left:96px;top:1033px;color:#000">Request command: PASS</div>
<div class="m" style="left:96px;top:1060px;color:#000">Request arg: xxXX1234</div>
<div class="m" style="left:36px;top:1087px;color:#000">[Current working directory: ]</div>
<div class="a" style="left:1284px;top:870px;width:1275px;height:476px;background:#fff;border-left:1px solid #757a83;border-bottom:1px solid #757a83"></div>
<div class="a" style="left:1285px;top:871px;width:65px;height:474px;background:#f0f0f0"></div>
<div class="a" style="left:1488px;top:894px;width:56px;height:24px;background:#00ad92"></div>
<div class="a" style="left:1949px;top:894px;width:21px;height:24px;background:#00ad92"></div>
<div class="h" style="left:1296px;top:873.0px;color:#a0a0a0">0000</div>
<div class="h" style="left:1360.2px;top:873.0px;">b2 7d f9 1e 47 5c 48 a9  8a 77 96 a7 08 00 45 00</div>
<div class="h" style="left:1907px;top:873.0px"><span style="color:#9a9a9a">·</span>}<span style="color:#9a9a9a">·</span><span style="color:#9a9a9a">·</span>G\H<span style="color:#9a9a9a">·</span> <span style="color:#9a9a9a">·</span>w<span style="color:#9a9a9a">·</span><span style="color:#9a9a9a">·</span><span style="color:#9a9a9a">·</span><span style="color:#9a9a9a">·</span>E<span style="color:#9a9a9a">·</span></div>
<div class="h" style="left:1296px;top:895.4px;color:#333">0010</div>
<div class="h" style="left:1360.2px;top:895.4px;">00 37 0b 15       7e 06  06 28 c0 a8 02 cf c0 a8</div>
<div class="h" style="left:1907px;top:895.4px"><span style="color:#9a9a9a">·</span>7<span style="color:#9a9a9a">·</span><span style="color:#9a9a9a">·</span>  ~<span style="color:#9a9a9a">·</span> <span style="color:#9a9a9a">·</span>(<span style="color:#9a9a9a">·</span><span style="color:#9a9a9a">·</span><span style="color:#9a9a9a">·</span><span style="color:#9a9a9a">·</span><span style="color:#9a9a9a">·</span><span style="color:#9a9a9a">·</span></div>
<div class="h" style="left:1296px;top:917.8px;color:#a0a0a0">0020</div>
<div class="h" style="left:1360.2px;top:917.8px;">67 64 de b0 00 15 63 83  fd a4 95 05 16 54 50 18</div>
<div class="h" style="left:1907px;top:917.8px">gd<span style="color:#9a9a9a">·</span><span style="color:#9a9a9a">·</span><span style="color:#9a9a9a">·</span><span style="color:#9a9a9a">·</span>c<span style="color:#9a9a9a">·</span> <span style="color:#9a9a9a">·</span><span style="color:#9a9a9a">·</span><span style="color:#9a9a9a">·</span><span style="color:#9a9a9a">·</span><span style="color:#9a9a9a">·</span>TP<span style="color:#9a9a9a">·</span></div>
<div class="h" style="left:1296px;top:940.2px;color:#a0a0a0">0030</div>
<div class="h" style="left:1360.2px;top:940.2px;">04 03 d0 17 00 00 50 41  53 53 20 78 78 58 58 31</div>
<div class="h" style="left:1907px;top:940.2px"><span style="color:#9a9a9a">·</span><span style="color:#9a9a9a">·</span><span style="color:#9a9a9a">·</span><span style="color:#9a9a9a">·</span><span style="color:#9a9a9a">·</span><span style="color:#9a9a9a">·</span>PA SS xxXX1</div>
<div class="h" style="left:1296px;top:962.6px;color:#a0a0a0">0040</div>
<div class="h" style="left:1360.2px;top:962.6px;">32 33 34 0d 0a</div>
<div class="h" style="left:1907px;top:962.6px">234<span style="color:#9a9a9a">·</span><span style="color:#9a9a9a">·</span></div>
<div class="h" style="left:1488.48px;top:895.4px;color:#fff">40 00</div>
<div class="h" style="left:1949.76px;top:895.4px;color:#fff">@·</div>
<div class="a" style="left:0;top:1346px;width:2559px;height:33px;background:#f0f0f0"></div>
<div class="a" style="left:0;top:1379px;width:2559px;height:1px;background:#fafafa"></div>
<div class="a" style="left:0;top:1380px;width:2559px;height:1px;background:#0e2424"></div>
<svg style="left:14px;top:1352px" width="24" height="24"><defs><radialGradient id="sb" cx="0.35" cy="0.3" r="0.8"><stop offset="0" stop-color="#a9c6ea"/><stop offset="1" stop-color="#6f9dd8"/></radialGradient></defs><circle cx="11.4" cy="11.4" r="10" fill="url(#sb)" stroke="#4a6684" stroke-width="1.2"/></svg>
<svg style="left:0;top:1340px" width="80" height="40"><rect x="50.5" y="13.5" width="16.5" height="20" fill="#f2f2ee" stroke="#d2d2cc" stroke-width="1"/><rect x="51" y="14" width="13" height="4.5" fill="#2c9ddd"/><path d="M54 18.5 C55 16 56.5 14.8 58.5 14.3 C57.8 15.5 57.8 17 58.2 18.5 Z" fill="#f4f4f4"/><g fill="#d6d6d0"><rect x="52.5" y="21.5" width="12" height="1.3"/><rect x="52.5" y="25.5" width="12" height="1.3"/><rect x="52.5" y="29.5" width="12" height="1.3"/></g><path d="M55.5 27.5 L68.5 14.5 L71.5 17.5 L58.5 30.5 L54.8 31.8 Z" fill="#5a5a5a"/><path d="M55.6 27.8 L58.2 30.4 L54.6 31.9 Z" fill="#111"/><path d="M68.5 14.5 L69.8 13.2 L72.8 16.2 L71.5 17.5 Z" fill="#888"/></svg>
<div class="s" style="left:95px;top:1351.7px;font-size:17.5px;line-height:26px">Request arg (ftp.request.arg), 8 byte(s)</div>
<div class="a" style="left:1545px;top:1351px;width:2px;height:26px;background:#a3a3a3;border-right:1px solid #f8f8f8"></div>
<div class="a" style="left:1551px;top:1351px;width:2px;height:26px;background:#a3a3a3;border-right:1px solid #f8f8f8"></div>
<div class="a" style="left:2389px;top:1351px;width:2px;height:26px;background:#a3a3a3;border-right:1px solid #f8f8f8"></div>
<div class="a" style="left:2395px;top:1351px;width:2px;height:26px;background:#a3a3a3;border-right:1px solid #f8f8f8"></div>
<div class="s" style="left:1570px;top:1351.7px;font-size:17.2px;line-height:26px">Пакеты: 47 · Отображаются: 47 (100.0%)</div>
<div class="s" style="left:2412px;top:1351.7px;font-size:17.5px;line-height:26px">Профиль: Default</div>
</body></html>
